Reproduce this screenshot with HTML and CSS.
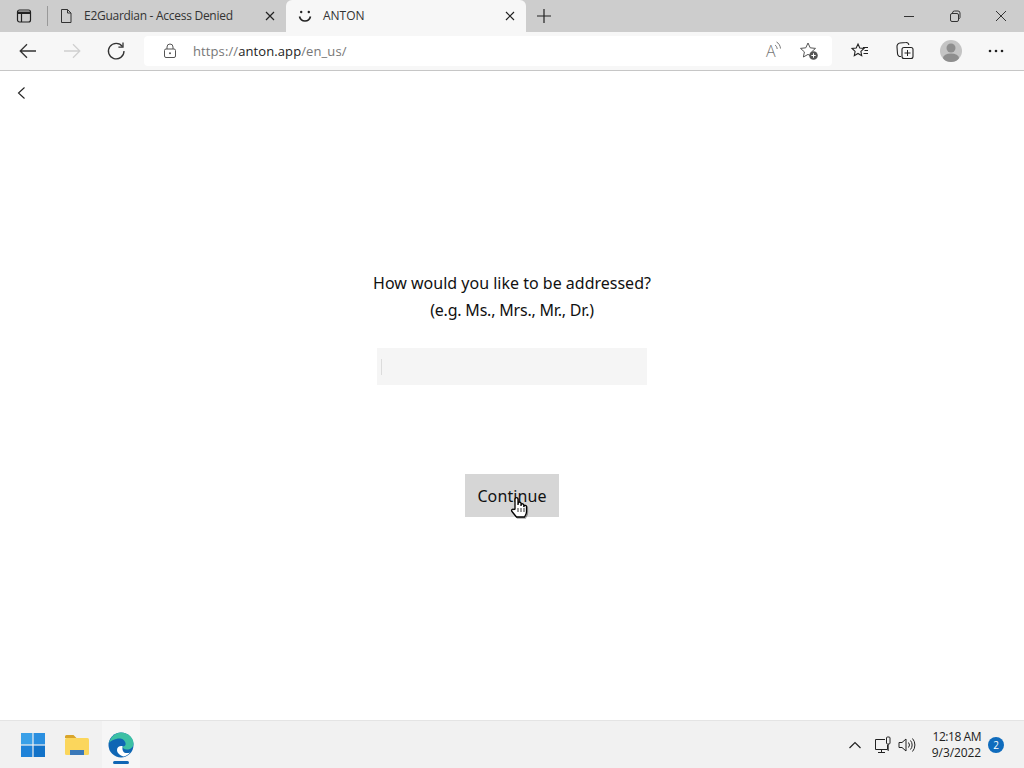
FILE: index.html
```html
<!DOCTYPE html>
<html lang="en">
<head>
<meta charset="utf-8">
<title>ANTON</title>
<link rel="stylesheet" href="styles.css">
</head>
<body>
<div class="screen">
  <header class="tabstrip">
    <div class="tab-action"><svg width="16" height="16" viewBox="0 0 16 16"><rect x="1.500" y="2" width="13" height="12" rx="2" fill="none" stroke="#222" stroke-width="1.200"/><path d="M1.500 4.800h13" stroke="#222" stroke-width="2.400"/><path d="M5.500 5v9" stroke="#222" stroke-width="1.200"/></svg></div>
    <div class="tab-sep"></div>
    <div class="tab">
      <svg class="tab-icon" width="16" height="16" viewBox="0 0 16 16"><path d="M3.500 1.500h6l3.500 3.500v9.500h-9.500z M9.500 1.500v3.500h3.500" fill="none" stroke="#333" stroke-width="1"/></svg>
      <span class="tab-title tab-title-long">E2Guardian - Access Denied</span>
      <svg class="tab-close" width="10" height="10" viewBox="0 0 10 10"><path d="M1 1l8 8M9 1l-8 8" stroke="#222" stroke-width="1.200"/></svg>
    </div>
    <div class="tab tab-active">
      <svg class="tab-icon" width="16" height="16" viewBox="0 0 16 16"><circle cx="4.200" cy="4" r="1.200" fill="#222"/><circle cx="11.800" cy="4" r="1.200" fill="#222"/><path d="M2.500 8.500c.8 3 3 4.500 5.500 4.500s4.700-1.500 5.500-4.500" fill="none" stroke="#222" stroke-width="1.700"/></svg>
      <span class="tab-title">ANTON</span>
      <svg class="tab-close" width="10" height="10" viewBox="0 0 10 10"><path d="M1 1l8 8M9 1l-8 8" stroke="#222" stroke-width="1.200"/></svg>
    </div>
    <div class="new-tab"><svg width="16" height="16" viewBox="0 0 16 16"><path d="M8 1v14M1 8h14" stroke="#222" stroke-width="1.200"/></svg></div>
    <div class="win-controls">
      <svg width="46" height="16" viewBox="0 0 46 16"><path d="M18 8.500h10" stroke="#333"/></svg>
      <svg width="46" height="16" viewBox="0 0 46 16"><rect x="18.500" y="5.500" width="8" height="8" rx="1.500" fill="none" stroke="#333"/><path d="M20.500 5.500v-.5a2 2 0 0 1 2-2h3.500a2 2 0 0 1 2 2v4.500a2 2 0 0 1-1.500 1.500" fill="none" stroke="#333"/></svg>
      <svg width="46" height="16" viewBox="0 0 46 16"><path d="M18 3l10 10M28 3l-10 10" stroke="#333"/></svg>
    </div>
  </header>

  <nav class="toolbar">
    <div class="tool tool-back"><svg width="20" height="20" viewBox="0 0 20 20"><path d="M18 10H2.500M9 3.200L2.200 10 9 16.800" fill="none" stroke="#333" stroke-width="1.300"/></svg></div>
    <div class="tool tool-fwd"><svg width="20" height="20" viewBox="0 0 20 20"><path d="M2 10h15.500M11 3.200L17.800 10 11 16.800" fill="none" stroke="#d0d0d0" stroke-width="1.300"/></svg></div>
    <div class="tool tool-reload"><svg width="20" height="20" viewBox="0 0 20 20"><path d="M16.500 5.500A7.800 7.800 0 1 0 18 10" fill="none" stroke="#333" stroke-width="1.300"/><path d="M17 1.500v4.600h-4.600" fill="none" stroke="#333" stroke-width="1.300"/></svg></div>
    <div class="address">
      <svg class="lock" width="14" height="16" viewBox="0 0 14 16"><rect x="1.500" y="6" width="11" height="8.500" rx="1.500" fill="none" stroke="#555"/><path d="M4 6V4a3 3 0 0 1 6 0v2" fill="none" stroke="#555"/><circle cx="7" cy="10.200" r="1" fill="#555"/></svg>
      <span class="url"><span class="url-dim">https://</span>anton.app<span class="url-dim">/en_us/</span></span>
      <div class="addr-actions">
        <div class="read-aloud"><span class="read-a">A</span><svg class="read-waves" width="8" height="12" viewBox="0 0 8 12"><path d="M1 4c1.300.9 2 2.300 2.200 4M2.500 1c2.200 1.200 3.700 3.400 4 6.500" fill="none" stroke="#777" stroke-width="1"/></svg></div>
        <svg width="20" height="20" viewBox="0 0 20 20"><path d="M9 2l2.200 4.800 5.300.6-3.900 3.500 1 5.100-4.600-2.600-4.600 2.600 1-5.100L1.500 7.400l5.300-.6z" fill="none" stroke="#555"/><circle cx="14.500" cy="14.500" r="4.300" fill="#555"/><path d="M14.500 12.300v4.400M12.300 14.500h4.400" stroke="#fff"/></svg>
      </div>
    </div>
    <div class="tool-group">
      <div class="tool"><svg width="20" height="20" viewBox="0 0 20 20"><path d="M8 3l1.800 4 4.200.5-3.100 2.900.8 4.300L8 12.500l-3.700 2.200.8-4.300L2 7.500l4.200-.5z" fill="none" stroke="#222" stroke-width="1.100"/><path d="M13 6.500h5M14.500 9.500h3.500M13.500 12.500h4.500" stroke="#222"/></svg></div>
      <div class="tool"><svg width="20" height="20" viewBox="0 0 20 20"><rect x="7" y="6.500" width="11" height="11" rx="2" fill="none" stroke="#222" stroke-width="1.100"/><path d="M12.500 9v6M9.500 12h6" stroke="#222"/><path d="M6 15.500a3 3 0 0 1-3.500-3L2 6a3.500 3.500 0 0 1 3-4l6-.5a2.500 2.500 0 0 1 2.800 2.500" fill="none" stroke="#222" stroke-width="1.100"/></svg></div>
      <div class="tool"><div class="avatar"><svg width="22" height="22" viewBox="0 0 22 22"><circle cx="11" cy="8" r="4.500" fill="#8e8e8e"/><ellipse cx="11" cy="18" rx="8" ry="4.500" fill="#8e8e8e"/></svg></div></div>
      <div class="tool"><svg width="20" height="20" viewBox="0 0 20 20"><circle cx="4" cy="10" r="1.300" fill="#222"/><circle cx="10" cy="10" r="1.300" fill="#222"/><circle cx="16" cy="10" r="1.300" fill="#222"/></svg></div>
    </div>
  </nav>

  <main class="page">
    <svg class="page-back" width="12" height="16" viewBox="0 0 12 16"><path d="M8.500 2.500L2.500 8l6 5.500" fill="none" stroke="#222" stroke-width="1.100"/></svg>
    <div class="prompt">
      <p>How would you like to be addressed?</p>
      <p class="prompt-hint">(e.g. Ms., Mrs., Mr., Dr.)</p>
    </div>
    <div class="field"><span class="caret"></span></div>
    <button class="continue" type="button">Continue</button>
    <svg class="hand" width="18" height="24" viewBox="0 0 18 24"><path d="M5 13V3.200a1.500 1.500 0 0 1 3 0V9l.2-1.500a1.400 1.400 0 0 1 2.800.2V10l.2-1.500a1.400 1.400 0 0 1 2.600.4V11l.2-.8a1.300 1.300 0 0 1 2.500.4V16c0 2-1 3.500-2 5H6.500L2 15.500c-1.200-1.500.8-3.300 2-2z" fill="#fff" stroke="#000" stroke-width="1.300"/><path d="M8 12v4M11 12v4M14 12v4" stroke="#000" stroke-width=".8"/></svg>
  </main>

  <footer class="taskbar">
    <div class="task task-start"><svg width="24" height="24" viewBox="0 0 24 24"><rect width="11.400" height="11.400" fill="#3aa0e8"/><rect x="12.600" width="11.400" height="11.400" fill="#2a8fe0"/><rect y="12.600" width="11.400" height="11.400" fill="#1f82d8"/><rect x="12.600" y="12.600" width="11.400" height="11.400" fill="#1272c8"/></svg></div>
    <div class="task task-files"><svg width="26" height="24" viewBox="0 0 26 24"><path d="M1 3.500A1.500 1.500 0 0 1 2.500 2h7l3 3H1z" fill="#d9a52b"/><rect x="1" y="5" width="24" height="17" rx="1.500" fill="#fbd65c"/><rect x="6" y="17" width="14" height="5" fill="#3a78b8"/></svg></div>
    <div class="task task-edge">
      <svg width="26" height="26" viewBox="0 0 26 26"><circle cx="13" cy="13" r="12.500" fill="#0f66b4"/><path d="M1 11C3 4 8 .5 13 .5c7 0 12.500 5 12.500 11 0 4-3.500 6-6.500 6-3 0-4.500-1.500-4.500-3 2.500 0 3.500-1.500 3-3.500C16.500 7 13 6 10 6.500 6 7 2.500 9 1 11z" fill="#3cc0a4"/><path d="M14.500 14c-3-.5-5.500 1-5.500 4 0 3 3 5.500 6.500 6.500 2.500-.5 5-2 6.500-4-2 1-6 1-7-1.500-.8-1.800-.5-3.500-.5-5z" fill="#fff"/></svg>
      <span class="task-line"></span>
    </div>
    <div class="tray">
      <svg class="tray-chev" width="14" height="10" viewBox="0 0 14 10"><path d="M1.500 8L7 2.500 12.500 8" fill="none" stroke="#222" stroke-width="1.200"/></svg>
      <svg class="tray-icon" width="18" height="18" viewBox="0 0 18 18"><path d="M11 3.500H1.500v10h12V9M7.500 13.500v3M4 16.500h7" fill="none" stroke="#222"/><rect x="12.500" y="1" width="3.500" height="7" rx="1" fill="none" stroke="#222"/><path d="M14.200 8v7" stroke="#222"/></svg>
      <svg class="tray-icon" width="18" height="18" viewBox="0 0 18 18"><path d="M1 6.500h3l4-3.500v12l-4-3.500H1z" fill="none" stroke="#222"/><path d="M10.500 6.500a4 4 0 0 1 0 5M12.500 4.500a7 7 0 0 1 0 9M14.500 2.500a10 10 0 0 1 0 13" fill="none" stroke="#222"/></svg>
      <div class="clock"><span class="clock-time">12:18 AM</span><span>9/3/2022</span></div>
      <span class="badge">2</span>
    </div>
  </footer>
</div>
</body>
</html>
```

FILE: styles.css
```css
* { box-sizing: border-box; }
html, body { margin: 0; padding: 0; }
body { width: 1024px; height: 768px; overflow: hidden; background: #fff; font-family: "Open Sans", "Noto Sans", sans-serif; }
svg { display: block; flex: none; }
.screen { display: flex; flex-direction: column; height: 768px; }

.tabstrip { height: 32px; flex: none; display: flex; align-items: center; background: #cdcdcd; color: #333; font-size: 12px; }
.tab-action { width: 47px; display: flex; justify-content: center; }
.tab-sep { width: 1px; height: 20px; background: #999; flex: none; }
.tab { width: 238px; height: 32px; flex: none; display: flex; align-items: center; padding: 0 10px; }
.tab-icon { margin-right: 10px; }
.tab-title { flex: 1; white-space: nowrap; padding-bottom: 1px; }
.tab-title-long { letter-spacing: -0.28px; }
.tab-close { margin-right: 1px; }
.tab-active { width: 240px; background: #f7f7f7; border-radius: 6px 6px 0 0; padding-left: 11px; }
.new-tab { width: 36px; display: flex; justify-content: center; }
.win-controls { margin-left: auto; display: flex; }

.toolbar { height: 38px; flex: none; display: flex; align-items: center; background: #f7f7f7; }
.tool { width: 44px; height: 38px; flex: none; display: flex; align-items: center; justify-content: center; }
.tool-back { width: 50px; margin-left: 3px; }
.tool-fwd { width: 38px; }
.tool-reload { width: 50px; }
.address { width: 688px; height: 30px; margin-left: 3px; display: flex; align-items: center; background: #fff; border-radius: 4px; padding-left: 19px; }
.lock { margin-right: 16px; }
.url { font-size: 13px; color: #222; letter-spacing: 0.1px; }
.url-dim { color: #777; }
.addr-actions { margin-left: auto; display: flex; align-items: center; gap: 16px; padding-right: 13px; }
.read-aloud { display: flex; align-items: flex-start; width: 17px; }
.read-a { font-size: 16px; font-weight: 300; line-height: 22px; color: #777; }
.read-waves { margin-left: -2px; margin-top: 1px; }
.tool-group { display: flex; margin-left: 5px; }
.tool-group .tool { width: 45.500px; }
.avatar { width: 22px; height: 22px; border-radius: 50%; background: #c4c4c4; overflow: hidden; }

.page { flex: 1; position: relative; display: flex; flex-direction: column; align-items: center; border-top: 1px solid #c6c6c6; font-family: "Noto Sans", sans-serif; color: #111; }
.page-back { position: absolute; left: 16px; top: 14px; }
.prompt { margin-top: 199px; text-align: center; font-size: 16px; line-height: 27px; }
.prompt p { margin: 0; }
.prompt-hint { letter-spacing: -0.2px; }
.field { width: 270px; height: 37px; margin-top: 24px; background: #f5f5f5; padding: 11px 4px; }
.caret { display: block; width: 1px; height: 16px; background: #dcdcdc; }
.continue { width: 94px; height: 43px; margin-top: 89px; border: 0; border-radius: 0; padding: 0; background: #d6d6d6; font: 16px "Noto Sans", sans-serif; letter-spacing: 0.1px; color: #111; }
.hand { position: absolute; left: 510px; top: 425px; filter: drop-shadow(1px 1px 0 rgba(0, 0, 0, .35)); }

.taskbar { height: 48px; flex: none; display: flex; align-items: center; background: #f1f1f1; border-top: 1px solid #e4e4e4; }
.task { display: flex; align-items: center; justify-content: center; position: relative; height: 47px; }
.task-start { width: 24px; margin-left: 21px; }
.task-files { width: 26px; margin-left: 19px; }
.task-edge { width: 38px; margin-left: 12px; background: #f6f6f6; }
.task-line { position: absolute; left: 11px; bottom: 4px; width: 16px; height: 3px; border-radius: 2px; background: #0f66b4; }
.tray { margin-left: auto; display: flex; align-items: center; padding-right: 20px; }
.tray-chev { margin-right: 12px; }
.tray-icon { margin-right: 6px; }
.clock { display: flex; flex-direction: column; align-items: flex-end; margin-left: 1px; width: 58px; font-size: 12px; line-height: 15.500px; color: #222; letter-spacing: -0.1px; }
.clock-time { letter-spacing: -0.45px; }
.badge { width: 16px; height: 16px; margin-left: 7px; border-radius: 50%; background: #0f6cbd; color: #fff; font-size: 10px; line-height: 16px; text-align: center; }
```
